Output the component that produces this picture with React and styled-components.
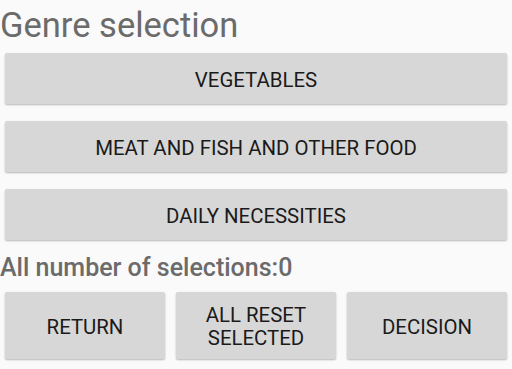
import styled, { createGlobalStyle } from 'styled-components';

const Global = createGlobalStyle`
    html, body {
        margin: 0;
        padding: 0;
        background: #fafafa;
    }
    body {
        font-family: Roboto, 'Noto Sans', sans-serif;
    }
`;

const Screen = styled.div`
    width: 512px;
    height: 369px;
    display: flex;
    flex-direction: column;
    overflow: hidden;
`;

const Title = styled.div`
    height: 53px;
    font-size: 34.5px;
    line-height: 50px;
    color: #6b6b6b;
`;

const GenreList = styled.div`
    display: flex;
    flex-direction: column;
    gap: 17px;
    padding: 0 5px;
`;

const Button = styled.button`
    height: ${(p) => p.$h || 51}px;
    border: none;
    border-radius: 2px;
    background: #d7d7d7;
    box-shadow: 0 1px 2px rgba(0, 0, 0, 0.28);
    color: #1a1a1a;
    font-family: Roboto, 'Noto Sans', sans-serif;
    font-size: 20.4px;
    line-height: 23px;
    text-align: center;
    padding: 3px 6px 0;
`;

const Count = styled.div`
    margin-top: 12px;
    height: 40px;
    font-size: 25px;
    line-height: 32px;
    color: #6b6b6b;
    font-weight: 500;
`;

const Footer = styled.div`
    display: grid;
    grid-template-columns: repeat(3, 160px);
    gap: 11px;
    padding: 0 5px;
`;

export default function App() {
    return (
        <Screen>
            <Global />
            <Title>Genre selection</Title>
            <GenreList>
                <Button>VEGETABLES</Button>
                <Button>MEAT AND FISH AND OTHER FOOD</Button>
                <Button>DAILY NECESSITIES</Button>
            </GenreList>
            <Count>All number of selections:0</Count>
            <Footer>
                <Button $h={67}>RETURN</Button>
                <Button $h={67}>
                    ALL RESET
                    <br />
                    SELECTED
                </Button>
                <Button $h={67}>DECISION</Button>
            </Footer>
        </Screen>
    );
}
